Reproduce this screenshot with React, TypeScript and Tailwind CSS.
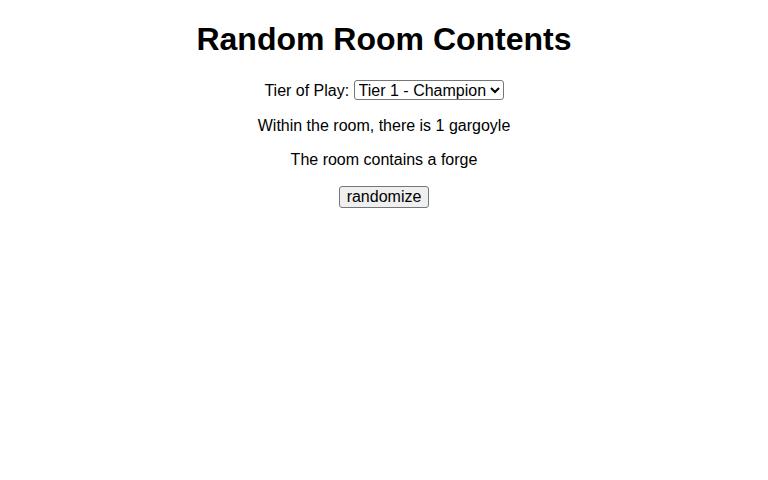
import React from "react";

export default function App() {
  return (
    <div className="min-h-[480px] bg-white text-center text-black text-[16px]" style={{ fontFamily: '"Liberation Sans", Arial, sans-serif' }}>
      <h1 className="text-[32px] font-bold leading-[37px] pt-[21px] mb-[22px]">Random Room Contents</h1>
      <div className="leading-[21px]">
        <label>Tier of Play: </label>
        <select
          defaultValue="1"
          className="text-[16px] leading-[18px] h-[20px] bg-white border border-[#767676] rounded-[3px] pl-0 pr-0 align-baseline"
          style={{ appearance: "auto" }}
        >
          <option value="1">Tier 1 - Champion</option>
          <option value="2">Tier 2</option>
        </select>
      </div>
      <p className="mt-4 mb-4 leading-[18px]">Within the room, there is 1 gargoyle</p>
      <p className="my-4 leading-[18px]">The room contains a forge</p>
      <button className="bg-[#efefef] border border-[#767676] rounded-[3px] px-[7px] py-[1px] h-[22px] leading-[18px] text-[16px]">
        randomize
      </button>
    </div>
  );
}
